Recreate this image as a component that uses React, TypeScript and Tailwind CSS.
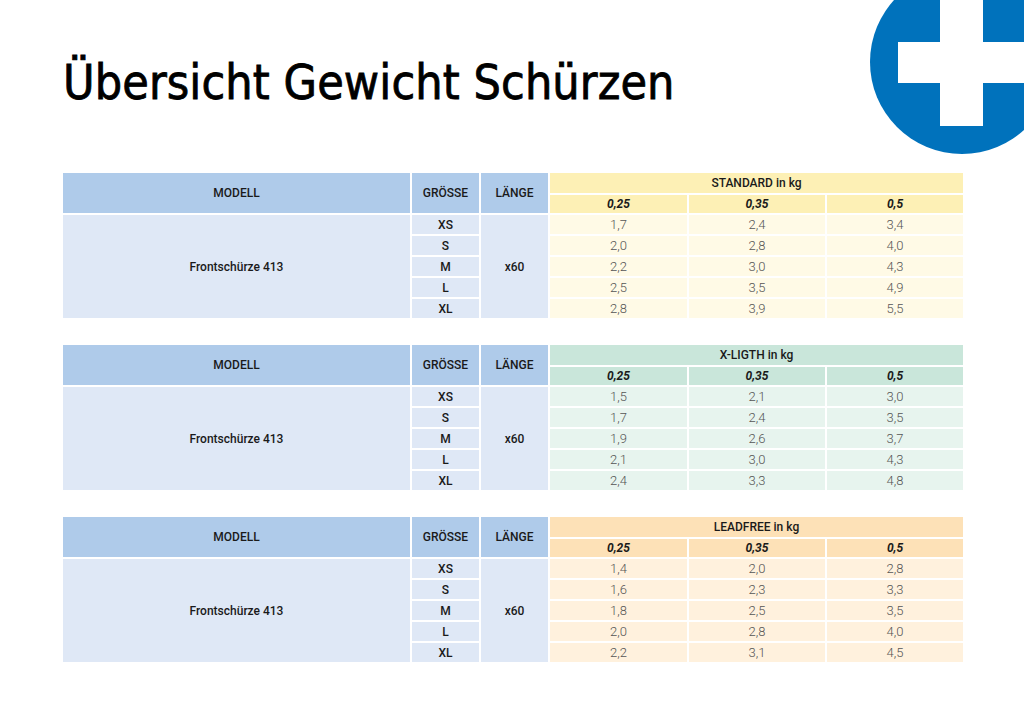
const sizes = ["XS", "S", "M", "L", "XL"];

type Variant = {
  name: string;
  head: string;
  body: string;
  values: string[][];
};

const variants: Variant[] = [
  {
    name: "STANDARD in kg",
    head: "bg-[#fdf0b5]",
    body: "bg-[#fffae6]",
    values: [
      ["1,7", "2,4", "3,4"],
      ["2,0", "2,8", "4,0"],
      ["2,2", "3,0", "4,3"],
      ["2,5", "3,5", "4,9"],
      ["2,8", "3,9", "5,5"],
    ],
  },
  {
    name: "X-LIGTH in kg",
    head: "bg-[#c9e6da]",
    body: "bg-[#e7f4ee]",
    values: [
      ["1,5", "2,1", "3,0"],
      ["1,7", "2,4", "3,5"],
      ["1,9", "2,6", "3,7"],
      ["2,1", "3,0", "4,3"],
      ["2,4", "3,3", "4,8"],
    ],
  },
  {
    name: "LEADFREE in kg",
    head: "bg-[#fde1b7]",
    body: "bg-[#fff1dd]",
    values: [
      ["1,4", "2,0", "2,8"],
      ["1,6", "2,3", "3,3"],
      ["1,8", "2,5", "3,5"],
      ["2,0", "2,8", "4,0"],
      ["2,2", "3,1", "4,5"],
    ],
  },
];

const cell = "flex items-center justify-center";

const WeightTable = ({ v }: { v: Variant }) => (
  <div className="grid grid-cols-[347px_67px_67px_137px_136px_136px] grid-rows-[20px_18px_repeat(5,19px)] gap-[2px] text-[12px] text-[#1a1a1a]">
    <div className={`${cell} row-span-2 bg-[#afcbea] font-medium`}>MODELL</div>
    <div className={`${cell} row-span-2 bg-[#afcbea] font-medium`}>GRÖSSE</div>
    <div className={`${cell} row-span-2 bg-[#afcbea] font-medium`}>LÄNGE</div>
    <div className={`${cell} col-span-3 ${v.head} font-medium`}>{v.name}</div>
    {["0,25", "0,35", "0,5"].map((t) => (
      <div key={t} className={`${cell} ${v.head} font-bold italic`}>
        {t}
      </div>
    ))}
    <div className={`${cell} row-span-5 col-start-1 row-start-3 bg-[#dfe8f6] font-medium`}>
      Frontschürze 413
    </div>
    {sizes.map((s, i) => (
      <div
        key={s}
        className={`${cell} col-start-2 bg-[#dfe8f6] font-medium`}
        style={{ gridRowStart: i + 3 }}
      >
        {s}
      </div>
    ))}
    <div className={`${cell} row-span-5 col-start-3 row-start-3 bg-[#dfe8f6] font-medium`}>x60</div>
    {v.values.map((row, i) =>
      row.map((val, j) => (
        <div
          key={`${i}-${j}`}
          className={`${cell} ${v.body} font-light text-[13px] text-[#555]`}
          style={{ gridRowStart: i + 3, gridColumnStart: j + 4 }}
        >
          {val}
        </div>
      ))
    )}
  </div>
);

export default function App() {
  return (
    <div className="relative w-[1024px] h-[724px] overflow-hidden bg-white font-['Roboto','Liberation_Sans',sans-serif]">
      <svg
        className="absolute left-[870px] top-[-30px]"
        width="184"
        height="184"
        viewBox="0 0 184 184"
      >
        <circle cx="92" cy="92" r="92" fill="#0072bc" />
        <rect x="70" y="0" width="43" height="156" fill="#fff" />
        <rect x="28" y="72" width="156" height="41" fill="#fff" />
      </svg>

      <div className="pl-[63px] pt-[52px]">
        <h1 className="text-[48px] leading-[60px] font-['DejaVu_Sans_Condensed','Liberation_Sans_Narrow','Roboto',sans-serif] text-black tracking-[0.1px] [-webkit-text-stroke:0.8px_black]">
          Übersicht Gewicht Schürzen
        </h1>
        <div className="mt-[61px] flex flex-col gap-[27px]">
          {variants.map((v) => (
            <WeightTable key={v.name} v={v} />
          ))}
        </div>
      </div>
    </div>
  );
}
